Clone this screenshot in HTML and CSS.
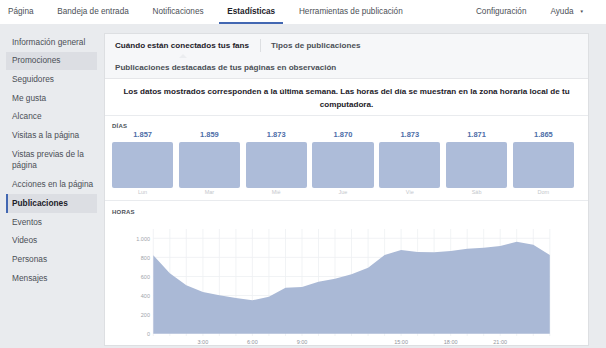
FILE: index.html
```html
<!DOCTYPE html>
<html lang="es">
<head>
<meta charset="utf-8">
<title>Estadísticas</title>
<link rel="stylesheet" href="styles.css">
</head>
<body>
<nav class="topnav">
  <div class="nav-left">
    <a class="nav-item">Página</a>
    <a class="nav-item">Bandeja de entrada</a>
    <a class="nav-item">Notificaciones</a>
    <a class="nav-item active">Estadísticas</a>
    <a class="nav-item">Herramientas de publicación</a>
  </div>
  <div class="nav-right">
    <a class="nav-item">Configuración</a>
    <a class="nav-item">Ayuda <span class="caret">▼</span></a>
  </div>
</nav>
<div class="layout">
  <aside class="sidebar">
    <div class="side-item">Información general</div>
    <div class="side-item hover">Promociones</div>
    <div class="side-item">Seguidores</div>
    <div class="side-item">Me gusta</div>
    <div class="side-item">Alcance</div>
    <div class="side-item">Visitas a la página</div>
    <div class="side-item">Vistas previas de la página</div>
    <div class="side-item">Acciones en la página</div>
    <div class="side-item selected">Publicaciones</div>
    <div class="side-item">Eventos</div>
    <div class="side-item">Videos</div>
    <div class="side-item">Personas</div>
    <div class="side-item">Mensajes</div>
  </aside>
  <main class="panel">
    <div class="tabs">
      <div class="tab-row">
        <span class="tab current">Cuándo están conectados tus fans<span class="notch"></span></span>
        <span class="tab sep">Tipos de publicaciones</span>
      </div>
      <div class="tab-row">
        <span class="tab">Publicaciones destacadas de tus páginas en observación</span>
      </div>
    </div>
    <p class="info">Los datos mostrados corresponden a la última semana. Las horas del día se muestran en la zona horaria local de tu computadora.</p>
    <section class="days">
      <div class="sec-title">DÍAS</div>
      <div class="bars">
        <div class="day"><div class="val">1.857</div><div class="bar"></div><div class="lbl">Lun</div></div>
        <div class="day"><div class="val">1.859</div><div class="bar"></div><div class="lbl">Mar</div></div>
        <div class="day"><div class="val">1.873</div><div class="bar"></div><div class="lbl">Mié</div></div>
        <div class="day"><div class="val">1.870</div><div class="bar"></div><div class="lbl">Jue</div></div>
        <div class="day"><div class="val">1.873</div><div class="bar"></div><div class="lbl">Vie</div></div>
        <div class="day"><div class="val">1.871</div><div class="bar"></div><div class="lbl">Sáb</div></div>
        <div class="day"><div class="val">1.865</div><div class="bar"></div><div class="lbl">Dom</div></div>
      </div>
    </section>
    <section class="hours">
      <div class="sec-title">HORAS</div>
      <svg class="chart" width="483" height="123" viewBox="0 0 483 123">
        <g class="grid">
          <line x1="48.3" y1="15.3" x2="444.8" y2="15.3"/>
          <line x1="48.3" y1="34.4" x2="444.8" y2="34.4"/>
          <line x1="48.3" y1="53.5" x2="444.8" y2="53.5"/>
          <line x1="48.3" y1="72.5" x2="444.8" y2="72.5"/>
          <line x1="48.3" y1="91.6" x2="444.8" y2="91.6"/>
          <line x1="48.3" y1="6" x2="48.3" y2="113"/>
          <line x1="64.8" y1="6" x2="64.8" y2="113"/>
          <line x1="81.3" y1="6" x2="81.3" y2="113"/>
          <line x1="97.9" y1="6" x2="97.9" y2="113"/>
          <line x1="114.4" y1="6" x2="114.4" y2="113"/>
          <line x1="130.9" y1="6" x2="130.9" y2="113"/>
          <line x1="147.4" y1="6" x2="147.4" y2="113"/>
          <line x1="163.9" y1="6" x2="163.9" y2="113"/>
          <line x1="180.5" y1="6" x2="180.5" y2="113"/>
          <line x1="197.0" y1="6" x2="197.0" y2="113"/>
          <line x1="213.5" y1="6" x2="213.5" y2="113"/>
          <line x1="230.0" y1="6" x2="230.0" y2="113"/>
          <line x1="246.5" y1="6" x2="246.5" y2="113"/>
          <line x1="263.1" y1="6" x2="263.1" y2="113"/>
          <line x1="279.6" y1="6" x2="279.6" y2="113"/>
          <line x1="296.1" y1="6" x2="296.1" y2="113"/>
          <line x1="312.6" y1="6" x2="312.6" y2="113"/>
          <line x1="329.1" y1="6" x2="329.1" y2="113"/>
          <line x1="345.7" y1="6" x2="345.7" y2="113"/>
          <line x1="362.2" y1="6" x2="362.2" y2="113"/>
          <line x1="378.7" y1="6" x2="378.7" y2="113"/>
          <line x1="395.2" y1="6" x2="395.2" y2="113"/>
          <line x1="411.7" y1="6" x2="411.7" y2="113"/>
          <line x1="428.3" y1="6" x2="428.3" y2="113"/>
          <line x1="444.8" y1="6" x2="444.8" y2="113"/>
        </g>
        <path class="area" d="M48.3 110.7 L48.3 32.3 L64.8 50.3 L81.3 62.3 L97.9 69 L114.4 72.3 L130.9 75 L147.4 77.3 L163.9 73.7 L180.5 64.7 L197 64 L213.5 58.7 L230 55.7 L246.5 51.3 L263.1 44.7 L279.6 32 L296.1 27 L312.6 29 L329.1 29.3 L345.7 28 L362.2 25.7 L378.7 24.7 L395.2 23 L411.7 18.7 L428.3 21.7 L444.8 32 L444.8 110.7 Z"/>
        <g class="ylab">
          <text x="45" y="17.5">1.000</text>
          <text x="45" y="36.6">800</text>
          <text x="45" y="55.7">600</text>
          <text x="45" y="74.7">400</text>
          <text x="45" y="93.8">200</text>
          <text x="45" y="112.9">0</text>
        </g>
        <g class="xlab">
          <text x="97.9" y="121">3:00</text>
          <text x="147.4" y="121">6:00</text>
          <text x="197" y="121">9:00</text>
          <text x="296.1" y="121">15:00</text>
          <text x="345.7" y="121">18:00</text>
          <text x="395.2" y="121">21:00</text>
        </g>
      </svg>
    </section>
  </main>
</div>
</body>
</html>
```
FILE: styles.css
```css
* { box-sizing: border-box; }
html, body { margin: 0; padding: 0; }
body {
  background: #e9ebee;
  font-family: "Liberation Sans", Arial, sans-serif;
  color: #4b4f56;
  width: 606px;
  height: 348px;
  overflow: hidden;
}
.topnav {
  height: 24px;
  background: #fff;
  display: flex;
  justify-content: space-between;
  font-size: 8.2px;
}
.nav-left, .nav-right { display: flex; gap: 7.8px; }
.nav-right { padding-right: 14px; gap: 8px; }
.nav-item {
  display: flex;
  align-items: center;
  padding: 1px 8px 0;
  color: #4b4f56;
  border-bottom: 2px solid transparent;
}
.nav-item.active {
  color: #1d2129;
  font-weight: bold;
  border-bottom-color: #4267b2;
}
.caret { font-size: 4.5px; margin-left: 6px; color: #4b4f56; }
.layout {
  display: flex;
  gap: 7px;
  padding: 9px 0 0 6px;
}
.sidebar { width: 91px; flex: none; font-size: 8.3px; }
.side-item {
  padding: 3.5px 0 3.5px 6px;
  line-height: 11.7px;
}
.side-item.hover { background: #dcdee3; }
.side-item.selected {
  background: #dcdee3;
  font-weight: bold;
  color: #1d2129;
  border-left: 2px solid #4267b2;
  padding-left: 4px;
}
.panel {
  width: 485px;
  height: 313px;
  background: #fff;
  border: 1px solid #dddfe2;
  flex: none;
}
.tabs {
  background: #f6f7f9;
  border-bottom: 1px solid #e5e6e9;
  height: 45px;
  font-size: 8.1px;
  font-weight: bold;
  color: #1d2129;
}
.tab-row {
  display: flex;
  align-items: center;
  height: 22px;
  padding-left: 10px;
}
.tab { position: relative; padding-right: 11px; }
.tab.current { color: #1d2129; }
.tab.sep { border-left: 1px solid #dddfe2; padding: 2px 0 2px 10px; color: #4b4f56; }
.tab-row + .tab-row .tab { color: #4b4f56; }
.notch {
  position: absolute;
  left: 64px;
  top: 13px;
  width: 0; height: 0;
  border-left: 4px solid transparent;
  border-right: 4px solid transparent;
  border-bottom: 4px solid #ebedf0;
}
.info {
  margin: 0;
  padding: 6px 10px 4px;
  text-align: center;
  font-size: 8.1px;
  line-height: 13px;
  font-weight: bold;
  color: #1d2129;
  height: 37px;
  border-bottom: 1px solid #e9ebee;
}
.sec-title {
  font-size: 6px;
  font-weight: bold;
  color: #4b4f56;
  letter-spacing: 0.2px;
}
.days {
  height: 85px;
  padding: 7px 14px 0 7px;
  border-bottom: 1px solid #e9ebee;
}
.bars { display: flex; gap: 5.6px; margin-top: 1px; }
.day { flex: 1; display: flex; flex-direction: column; align-items: center; }
.val { font-size: 7.5px; font-weight: bold; color: #4d6da8; line-height: 10px; }
.bar {
  width: 100%;
  height: 46.6px;
  margin-top: 1.5px;
  background: #adbcd9;
  border-radius: 2px;
}
.lbl { font-size: 5.5px; color: #c4c7cc; line-height: 8px; }
.hours { padding: 8px 0 0 7px; }
.hours .sec-title { height: 14px; }
.chart { display: block; margin-left: -7px; }
.grid line { stroke: #eef0f3; stroke-width: 0.8; }
.area { fill: #aab9d6; }
.ylab text { font-family: "Liberation Sans", Arial, sans-serif; font-size: 5.5px; fill: #a0a4aa; text-anchor: end; }
.xlab text { font-family: "Liberation Sans", Arial, sans-serif; font-size: 5.5px; fill: #90949c; text-anchor: middle; }
```
